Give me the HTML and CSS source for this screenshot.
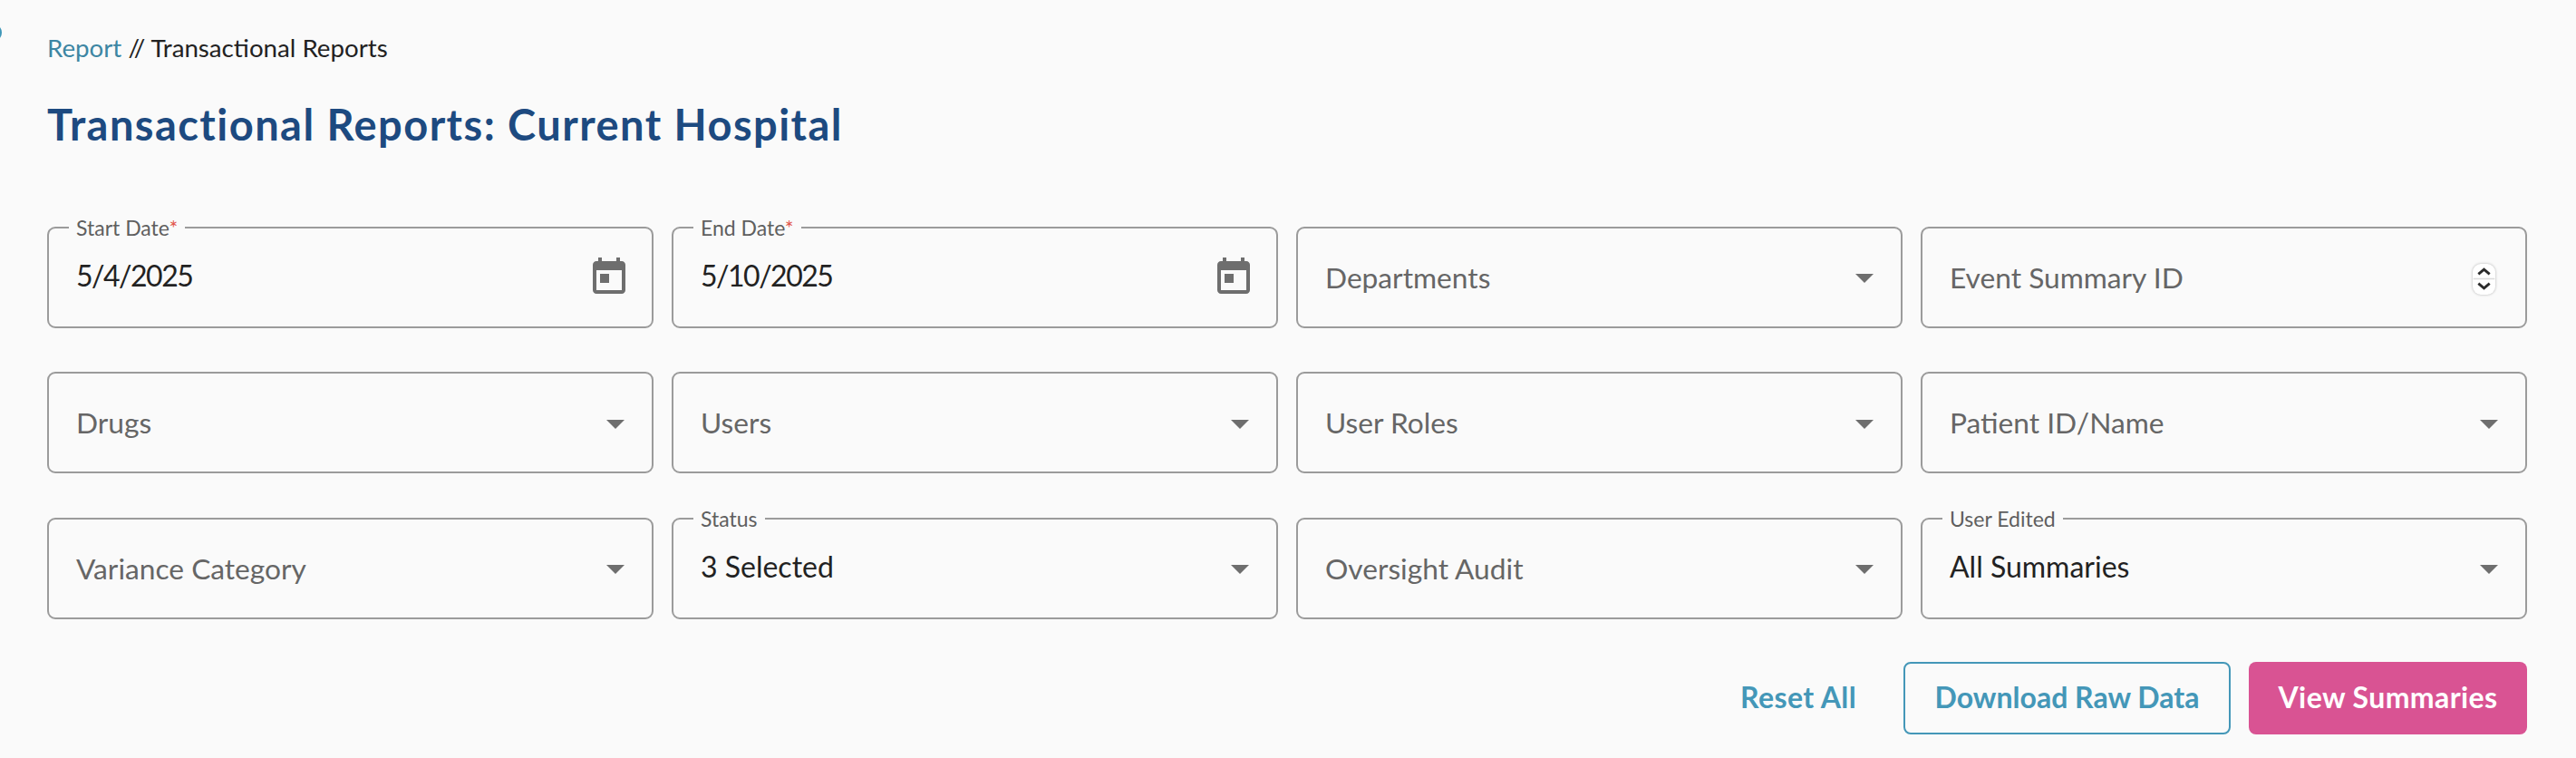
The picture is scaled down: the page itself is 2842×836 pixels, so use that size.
FILE: index.html
```html
<!DOCTYPE html>
<html lang="en">
<head>
<meta charset="utf-8">
<title>Transactional Reports</title>
<link rel="stylesheet" href="styles.css">
</head>
<body>
<span class="edge-dot"></span>
<main class="page">
  <nav class="crumbs"><a class="crumb-link">Report</a> // Transactional Reports</nav>
  <h1 class="title">Transactional Reports: Current Hospital</h1>
  <section class="grid">
    <div class="field filled"><span class="legend">Start Date<i class="req">*</i></span><span class="value date">5/4/2025</span>
      <svg class="cal" viewBox="0 0 24 24"><path d="M19 4h-1V2h-2v2H8V2H6v2H5c-1.1 0-2 .9-2 2v14c0 1.1.9 2 2 2h14c1.1 0 2-.9 2-2V6c0-1.100-.9-2-2-2zm0 16H5V9h14v11zM7 11h5v5H7z"/></svg></div>
    <div class="field filled"><span class="legend">End Date<i class="req">*</i></span><span class="value date">5/10/2025</span>
      <svg class="cal" viewBox="0 0 24 24"><path d="M19 4h-1V2h-2v2H8V2H6v2H5c-1.1 0-2 .9-2 2v14c0 1.1.9 2 2 2h14c1.1 0 2-.9 2-2V6c0-1.100-.9-2-2-2zm0 16H5V9h14v11zM7 11h5v5H7z"/></svg></div>
    <div class="field"><span class="placeholder">Departments</span><span class="caret"></span></div>
    <div class="field"><span class="placeholder">Event Summary ID</span>
      <span class="spinner"><svg viewBox="0 0 23 33"><path d="M0 16h23" stroke="#dcdcdc" stroke-width="1.500"/><path d="M5.500 11l6-5 6 5M5.500 21l6 5 6-5" fill="none" stroke="#2b2b2b" stroke-width="2.800"/></svg></span></div>
    <div class="field"><span class="placeholder">Drugs</span><span class="caret"></span></div>
    <div class="field"><span class="placeholder">Users</span><span class="caret"></span></div>
    <div class="field"><span class="placeholder">User Roles</span><span class="caret"></span></div>
    <div class="field"><span class="placeholder">Patient ID/Name</span><span class="caret"></span></div>
    <div class="field"><span class="placeholder">Variance Category</span><span class="caret"></span></div>
    <div class="field filled"><span class="legend">Status</span><span class="value">3 Selected</span><span class="caret"></span></div>
    <div class="field"><span class="placeholder">Oversight Audit</span><span class="caret"></span></div>
    <div class="field filled"><span class="legend">User Edited</span><span class="value">All Summaries</span><span class="caret"></span></div>
  </section>
  <footer class="actions">
    <button class="btn text">Reset All</button>
    <button class="btn outline">Download Raw Data</button>
    <button class="btn solid">View Summaries</button>
  </footer>
</main>
</body>
</html>
```
FILE: styles.css
```css
* { box-sizing: border-box; }
html, body { margin: 0; height: 100%; }
body { background: #fafafa; font-family: "Lato", "Liberation Sans", sans-serif; color: #222; overflow: hidden; position: relative; }
.edge-dot { position: absolute; left: -18px; top: 26px; width: 20px; height: 20px; border-radius: 50%; border: 2px solid #3f97b8; }
.page { padding: 36px 54px 0 52px; }
.crumbs { font-size: 27.7px; line-height: 34px; color: #222; }
.crumb-link { color: #3d86a3; }
.title { margin: 39px 0 0; font-size: 47px; line-height: 56px; font-weight: 700; letter-spacing: 1.45px; color: #1d4a80; }
.grid { display: grid; grid-template-columns: repeat(4, 1fr); column-gap: 20px; row-gap: 48.5px; margin-top: 84.5px; }
.field { position: relative; height: 112px; border: 2px solid #9b9b9b; border-radius: 9px; display: flex; align-items: center; justify-content: space-between; padding: 0 30px; }
.legend { position: absolute; left: 22px; top: -14px; padding: 0 8px; background: #fafafa; font-size: 23px; line-height: 26px; color: #5f5f5f; }
.req { color: #e2574c; font-style: normal; }
.value { font-size: 32px; color: #222; margin-top: -4px; }
.date { letter-spacing: -1.500px; }
.placeholder { font-size: 31.7px; color: #666; }
.caret { width: 0; height: 0; border-left: 10px solid transparent; border-right: 10px solid transparent; border-top: 10px solid #6e6e6e; margin: 3px 0 0 0; }
.cal { width: 48px; height: 48px; fill: #6e6e6e; margin: -3px -7px 0 0; }
.spinner { width: 25px; height: 34px; background: #fff; border-radius: 9px; box-shadow: 0 0 3px rgba(0,0,0,.3); display: block; margin: 5px 3px 0 0; }
.spinner svg { display: block; width: 25px; height: 34px; }
.actions { display: flex; justify-content: flex-end; align-items: center; gap: 20px; margin-top: 47.5px; }
.btn { height: 80px; border-radius: 8px; font-family: inherit; font-size: 32px; font-weight: 700; line-height: 74px; padding: 0 30px 6px; background: none; border: 2px solid transparent; }
.text { color: #4497b8; letter-spacing: .4px; }
.outline { color: #4497b8; border-color: #4497b8; width: 361px; }
.solid { color: #fff; background: #d95393; width: 307px; letter-spacing: .4px; }
```
